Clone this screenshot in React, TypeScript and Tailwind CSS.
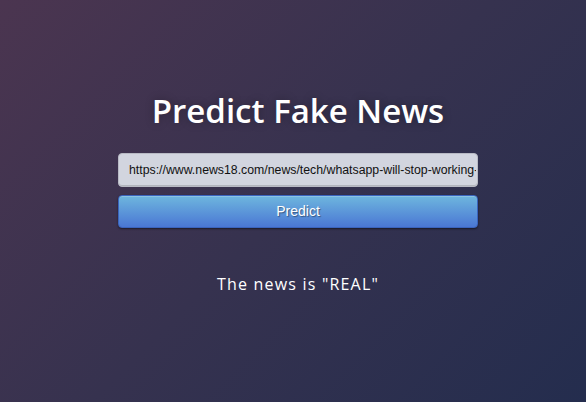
import { useState } from "react";

export default function App() {
  const [url, setUrl] = useState(
    "https://www.news18.com/news/tech/whatsapp-will-stop-working-on-these-smartphones-from-november-1-check-full-list-4358891.html"
  );

  return (
    <div className="h-[402px] w-full pl-[10px] bg-[linear-gradient(135deg,#4b3550_0%,#36324f_50%,#242d4e_100%)] flex flex-col items-center font-['Open_Sans',sans-serif]">
      <h1 className="mt-[89px] text-[33px] leading-[44px] font-semibold text-white [text-shadow:0_0_10px_rgba(0,0,0,0.3)]">
        Predict Fake News
      </h1>
      <form
        className="mt-[20px] w-[360px] flex flex-col gap-[8px]"
        onSubmit={(e) => e.preventDefault()}
      >
        <input
          className="h-[34px] w-full pl-[10px] pr-[1px] rounded-[4px] bg-[#d2d5df] border border-[#b8bac4] text-[12.3px] text-[#111] font-['Liberation_Sans',Arial,sans-serif] shadow-[inset_0_-1px_0_rgba(0,0,0,0.15)] outline-none"
          value={url}
          onChange={(e) => setUrl(e.target.value)}
        />
        <button className="h-[33px] w-full rounded-[4px] border border-[#3a64bd] bg-[linear-gradient(to_bottom,#6eb6de,#4a77d4)] text-white text-[14px] font-['Liberation_Sans',Arial,sans-serif] [text-shadow:1px_1px_1px_rgba(0,0,0,0.4)] shadow-[inset_0_1px_0_rgba(255,255,255,0.2),0_1px_2px_rgba(0,0,0,0.5)]">
          Predict
        </button>
      </form>
      <p className="mt-[44px] text-[16px] text-white tracking-[1.2px]">
        The news is "REAL"
      </p>
    </div>
  );
}
